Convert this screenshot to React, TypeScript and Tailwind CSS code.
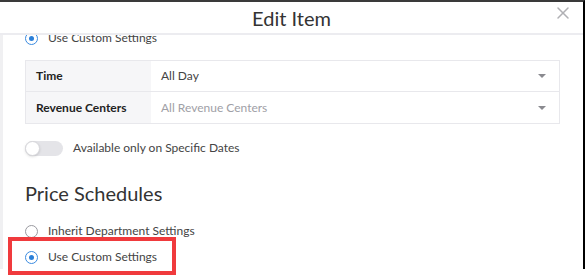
import { X } from "lucide-react"

function Radio({ checked }: { checked?: boolean }) {
  return (
    <span
      className={
        "flex h-[13px] w-[13px] items-center justify-center rounded-full border " +
        (checked ? "border-[#3b8be0]" : "border-[#9a9aa0]")
      }
    >
      {checked && <span className="h-[5px] w-[5px] rounded-full bg-[#2a7fd8]" />}
    </span>
  )
}

function Caret() {
  return <span className="h-0 w-0 border-x-[4px] border-t-[4px] border-x-transparent border-t-[#8a8a8f]" />
}

export default function App() {
  return (
    <div
      className="relative flex h-[276px] w-[585px] flex-col overflow-hidden bg-white text-[#3a3a3f]"
      style={{ fontFamily: "Lato, 'Open Sans', sans-serif" }}
    >
      <div className="flex h-[269px] flex-col border-t-2 border-r-2 border-t-[#3a3a3a] border-r-black">
        {/* header */}
        <div className="relative z-10 flex h-[33px] shrink-0 items-center justify-center border-b-2 border-[#ececf0] bg-white">
          <span className="text-[20px] text-[#333]">Edit Item</span>
          <X className="absolute right-[10px] top-[1px] h-[20px] w-[20px] text-[#b0b0b4]" strokeWidth={1.8} />
        </div>

        {/* body */}
        <div className="flex-1 overflow-hidden border-l-[3px] border-[#f0f0f2]">
          <div className="-mt-[4px] flex flex-col pl-[22px] pr-[23px]">
            <div className="flex h-[14px] items-center gap-[10px] text-[12px] text-[#444]">
              <Radio checked />
              <span>Use Custom Settings</span>
            </div>

            <div className="mt-[15px] border border-[#e8e8ec] text-[12px]">
              <div className="flex h-[31px] border-b border-[#e8e8ec]">
                <div className="flex w-[125px] items-center bg-[#f6f6f8] pl-[10px] font-bold text-[#222]">Time</div>
                <div className="flex flex-1 items-center justify-between pl-[10px] pr-[13px] text-[#444]">
                  <span>All Day</span>
                  <Caret />
                </div>
              </div>
              <div className="flex h-[31px]">
                <div className="flex w-[125px] items-center bg-[#f6f6f8] pl-[10px] font-bold text-[#222]">Revenue Centers</div>
                <div className="flex flex-1 items-center justify-between pl-[10px] pr-[13px] text-[#a0a0a6]">
                  <span>All Revenue Centers</span>
                  <Caret />
                </div>
              </div>
            </div>

            <div className="mt-[15px] flex items-center gap-[10px] text-[12px] text-[#444]">
              <span className="relative flex h-[15px] w-[38px] items-center rounded-full bg-[#e4e4e8]">
                <span className="absolute left-0 h-[15px] w-[15px] rounded-full border border-[#d6d6da] bg-white shadow-sm" />
              </span>
              <span>Available only on Specific Dates</span>
            </div>

            <div className="mt-[24px] text-[20px] leading-[24px] text-[#333]">Price Schedules</div>

            <div className="mt-[17px] flex items-center gap-[10px] text-[12px] text-[#444]">
              <Radio />
              <span>Inherit Department Settings</span>
            </div>
            <div className="mt-[8px] flex items-center gap-[10px] text-[12px] text-[#444]">
              <Radio checked />
              <span>Use Custom Settings</span>
            </div>
          </div>
        </div>
      </div>

      <div className="absolute left-[8px] top-[237px] h-[38px] w-[168px] border-4 border-[#f03a3d]" />
    </div>
  )
}
